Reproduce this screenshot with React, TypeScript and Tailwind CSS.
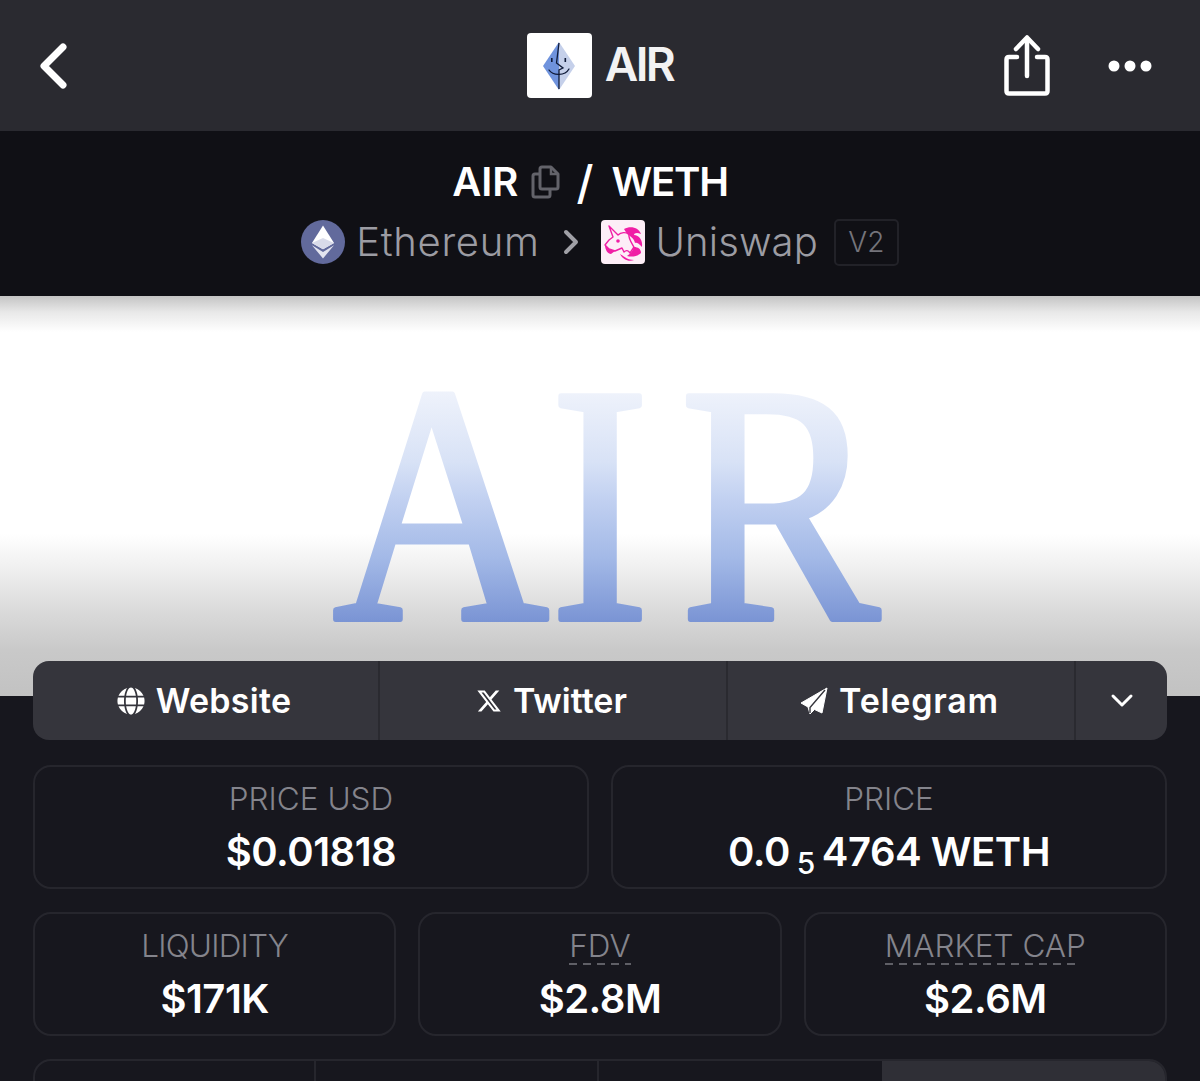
import { FaGlobe } from "react-icons/fa";
import { FaXTwitter } from "react-icons/fa6";

function Back() {
  return (
    <svg width="32" height="48" viewBox="0 0 32 48" fill="none" className="block">
      <path d="M26 5 L7 24 L26 43" stroke="#fff" strokeWidth="7" strokeLinecap="round" strokeLinejoin="round" />
    </svg>
  );
}

function Logo() {
  return (
    <div className="w-[65px] h-[65px] bg-white rounded-[4px] flex items-center justify-center">
      <svg width="32" height="48" viewBox="0 0 32 48">
        <path d="M16 0 L0 24 L16 48 Z" fill="#6f93dd" />
        <path d="M16 0 L32 24 L16 48 Z" fill="#c5d0ea" />
        <path d="M16 1 L13.5 21 L20 26 L16 28 L16 47" fill="none" stroke="#0f1a38" strokeWidth="1.3" />
        <path d="M6 28 C10 34 22 34 26 27" fill="none" stroke="#0f1a38" strokeWidth="1.3" strokeLinecap="round" />
        <rect x="8" y="16" width="1.6" height="4" fill="#0f1a38" />
        <rect x="21.5" y="16" width="1.6" height="4" fill="#0f1a38" />
      </svg>
    </div>
  );
}

function Share() {
  return (
    <svg width="46" height="62" viewBox="0 0 46 62" fill="none" className="block">
      <path d="M13 22 H5 Q2.5 22 2.5 24.5 V56 Q2.5 58.5 5 58.5 H41 Q43.5 58.5 43.5 56 V24.5 Q43.5 22 41 22 H33" stroke="#fff" strokeWidth="4.5" strokeLinecap="round" />
      <path d="M23 4 V41" stroke="#fff" strokeWidth="4.5" strokeLinecap="round" />
      <path d="M12 14 L23 2.5 L34 14" stroke="#fff" strokeWidth="4.5" strokeLinecap="round" strokeLinejoin="round" />
    </svg>
  );
}

function Dots() {
  return (
    <svg width="46" height="14" viewBox="0 0 46 14" className="block">
      <circle cx="7" cy="7" r="5.5" fill="#fff" />
      <circle cx="23" cy="7" r="5.5" fill="#fff" />
      <circle cx="39" cy="7" r="5.5" fill="#fff" />
    </svg>
  );
}

function CopyIcon() {
  return (
    <svg width="29" height="34" viewBox="0 0 29 34" fill="none" className="block">
      <path d="M11 2 H20 L27 9 V22 Q27 24 25 24 H11 Q9 24 9 22 V4 Q9 2 11 2 Z" stroke="#63636a" strokeWidth="3" strokeLinejoin="round" />
      <path d="M20 2 V9 H27" stroke="#63636a" strokeWidth="2.5" />
      <path d="M9 9 H4 Q2 9 2 11 V30 Q2 32 4 32 H17 Q19 32 19 30 V24" stroke="#63636a" strokeWidth="3" />
    </svg>
  );
}

function EthIcon() {
  return (
    <div className="w-[44px] h-[44px] rounded-full bg-[#626a9c] flex items-center justify-center">
      <svg width="22" height="34" viewBox="0 0 24 36">
        <path d="M12 0 L0 19 L12 26 L24 19 Z" fill="#fff" />
        <path d="M0 21.5 L12 36 L24 21.5 L12 29 Z" fill="#e3e4ef" />
        <path d="M0 19 L12 13.5 L24 19 L12 26 Z" fill="#d9dbe9" />
      </svg>
    </div>
  );
}

function Unicorn() {
  return (
    <div className="w-[44px] h-[44px] rounded-[4px] bg-[#fdeef7] flex items-center justify-center">
      <svg width="44" height="44" viewBox="0 0 44 44" fill="#f01ea5">
        <path d="M8 6 L17 15 C20 12 25 12 28 14 C27 18 30 22 33 27 L29 33 C27 30 25 30 23 32 L21 28 L14 31 L8 29 L4 25 L8 20 L12 17 Z" fill="none" stroke="#f01ea5" strokeWidth="1.4" strokeLinejoin="round" />
        <path d="M23 9 C30 5 38 8 40 14 C36 12 33 13 33 15 C38 15 42 20 41 27 C38 23 35 22 34 23 C33 18 29 16 26 14 C25 12 24 11 23 9 Z" />
        <path d="M33 27 C37 27 40 29 40 33 C36 37 30 37 26 36 C29 34 32 31 33 27 Z" />
        <path d="M4 25 L8 29 L14 31 L10 34 C7 34 4 30 4 25 Z" />
        <path d="M19 34 C24 37 27 40 33 40 C28 42 22 40 19 34 Z" />
        <circle cx="17" cy="21" r="1.8" />
      </svg>
    </div>
  );
}

function PlaneIcon() {
  return (
    <svg width="28" height="28" viewBox="0 0 28 28" className="block">
      <path d="M27 1 L1 16 L8 20 L10 27 L14.5 22.5 L22 26 Z" fill="#fff" strokeLinejoin="round" stroke="#fff" strokeWidth="1" />
      <path d="M25 3 L10 20.5 L10 26" fill="none" stroke="#35353c" strokeWidth="1.4" />
    </svg>
  );
}

function Stat({ label, value, dashed, dashInset, labelClass }: { label: string; value: React.ReactNode; dashed?: boolean; dashInset?: string; labelClass?: string }) {
  return (
    <div className="h-[124px] border-2 border-[#26262d] rounded-[18px] flex flex-col items-center">
      <div className={`relative mt-[12px] h-[40px] text-[31.5px] leading-[40px] font-light text-[#84848c] ${labelClass ?? ""}`}>
        {label}
        {dashed && <span className={`absolute left-0 top-[37px] h-[2px] bg-[repeating-linear-gradient(to_right,#5f5f66_0px,#5f5f66_8px,transparent_8px,transparent_14px)] ${dashInset}`} />}
      </div>
      <div className="mt-[7px] text-[40px] leading-[52px] font-semibold text-white tracking-[-0.5px] flex items-baseline">{value}</div>
    </div>
  );
}

function LinkCell({ icon, text, border, textClass }: { icon: React.ReactNode; text: string; border?: boolean; textClass?: string }) {
  return (
    <div className={`flex items-center justify-center gap-[11px] pr-[3px] text-white text-[34px] font-semibold ${border ? "border-r-2 border-[#2a2a30]" : ""}`}>
      {icon}
      <span className={textClass}>{text}</span>
    </div>
  );
}

export default function App() {
  return (
    <div className="w-[1200px] h-[1081px] overflow-hidden bg-[#17171e] font-['Inter','Liberation_Sans',sans-serif]">
      <header className="h-[131px] bg-[#2a2a30] grid grid-cols-[1fr_auto_1fr] items-center pl-[37px] pr-[47px]">
        <Back />
        <div className="flex items-center gap-[13px] ml-[10px]">
          <Logo />
          <span className="mb-[4px] text-[46px] font-semibold text-[#f2f2f3] tracking-[-2.6px] leading-none">AIR</span>
        </div>
        <div className="flex items-center justify-end gap-[57px]">
          <Share />
          <Dots />
        </div>
      </header>

      <section className="h-[165px] bg-[#101015] flex flex-col items-center">
        <div className="-ml-[20px] mt-[26px] h-[50px] flex items-center text-[40px] leading-[50px] font-semibold text-white">
          <span className="tracking-[0px]">AIR</span>
          <span className="ml-[13px]"><CopyIcon /></span>
          <span className="ml-[16px] text-[46px] font-medium">/</span>
          <span className="ml-[18px] tracking-[-1.2px]">WETH</span>
        </div>
        <div className="mt-[10px] flex items-center h-[50px]">
          <EthIcon />
          <span className="ml-[11px] text-[40px] font-light text-[#9c9ca3] leading-none tracking-[0.7px]">Ethereum</span>
          <svg width="18" height="28" viewBox="0 0 18 28" fill="none" className="ml-[22px]">
            <path d="M4 4 L14 14 L4 24" stroke="#a0a0a6" strokeWidth="4" strokeLinecap="round" strokeLinejoin="round" />
          </svg>
          <div className="ml-[21px]"><Unicorn /></div>
          <span className="ml-[11px] text-[40px] font-light text-[#9c9ca3] leading-none tracking-[0.1px]">Uniswap</span>
          <div className="ml-[16px] w-[65px] h-[47px] border-2 border-[#222228] rounded-[5px] flex items-center justify-center text-[28px] font-light text-[#74747b]">V2</div>
        </div>
      </section>

      <section className="h-[400px] overflow-hidden bg-[linear-gradient(to_bottom,#c4c4c4_0px,#e8e8e8_16px,#ffffff_36px,#ffffff_238px,#ececec_280px,#d8d8d8_320px,#c9c9c9_354px,#c2c2c2_400px)] flex justify-center">
        <svg width="640" height="400" viewBox="0 0 640 400" className="blur-[0.6px]">
          <defs>
            <linearGradient id="airFill" gradientUnits="userSpaceOnUse" x1="0" y1="97" x2="0" y2="326">
              <stop offset="0" stopColor="#eef2fb" />
              <stop offset="0.3" stopColor="#d8e2f6" />
              <stop offset="0.46" stopColor="#c2d1f1" />
              <stop offset="0.72" stopColor="#a3b9e7" />
              <stop offset="1" stopColor="#7a94d4" />
            </linearGradient>
          </defs>
          <text
            x="60 307 454.5"
            y="323"
            transform="scale(0.88 1)"
            fontSize="340"
            fontFamily="'Liberation Serif', serif"
            fill="url(#airFill)"
            stroke="url(#airFill)"
            strokeWidth="6"
            strokeLinejoin="round"
          >
            AIR
          </text>
        </svg>
      </section>

      <div className="px-[33px]">
        <nav className="-mt-[35px] relative h-[79px] bg-[#35353c] rounded-[16px] grid grid-cols-[347px_348px_348px_1fr] overflow-hidden">
          <LinkCell border icon={<FaGlobe size={28} />} text="Website" textClass="tracking-[0.3px]" />
          <LinkCell border icon={<FaXTwitter size={26} />} text="Twitter" />
          <LinkCell border icon={<PlaneIcon />} text="Telegram" textClass="tracking-[0.8px]" />
          <div className="flex items-center justify-center">
            <svg width="24" height="16" viewBox="0 0 24 16" fill="none">
              <path d="M3 3 L12 12 L21 3" stroke="#fff" strokeWidth="3" strokeLinecap="round" strokeLinejoin="round" />
            </svg>
          </div>
        </nav>

        <div className="mt-[25px] grid grid-cols-2 gap-[22px]">
          <Stat label="PRICE USD" value="$0.01818" />
          <Stat
            label="PRICE"
            value={
              <>
                0.0
                <span className="text-[30px] font-medium relative top-[8px] mx-[7px]">5</span>
                4764 WETH
              </>
            }
          />
        </div>
        <div className="mt-[23px] grid grid-cols-3 gap-[22px]">
          <Stat label="LIQUIDITY" value="$171K" labelClass="tracking-[-0.8px]" />
          <Stat label="FDV" value="$2.8M" dashed dashInset="right-0" />
          <Stat label="MARKET CAP" value="$2.6M" dashed dashInset="right-[10px]" />
        </div>
        <div className="mt-[23px] h-[60px] border-2 border-[#26262d] rounded-t-[18px] grid grid-cols-[281px_283px_283px_1fr] overflow-hidden">
          <div className="border-r-2 border-[#26262d]" />
          <div className="border-r-2 border-[#26262d]" />
          <div />
          <div className="bg-[#2f2f36]" />
        </div>
      </div>
    </div>
  );
}
